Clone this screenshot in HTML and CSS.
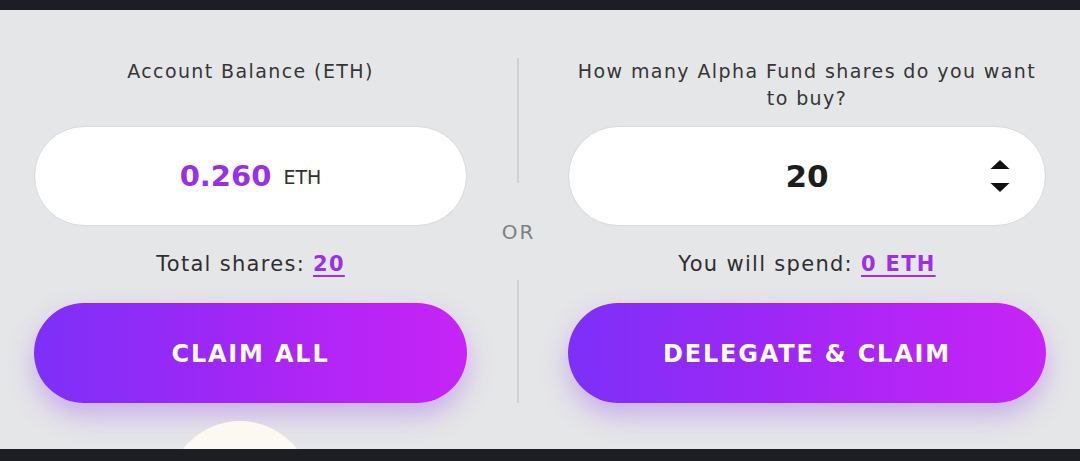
FILE: index.html
```html
<!DOCTYPE html>
<html>
<head>
<meta charset="utf-8">
<link rel="stylesheet" href="styles.css">
</head>
<body>
<div class="topbar"></div>
<main class="panel">
  <section class="col col-left">
    <div class="label">Account Balance (ETH)</div>
    <div class="pill">
      <span class="amount">0.260</span><span class="unit">ETH</span>
    </div>
    <div class="info">Total shares: <a class="val">20</a></div>
    <button class="btn">CLAIM ALL</button>
  </section>
  <div class="divider">
    <div class="vline vline-top"></div>
    <div class="or">OR</div>
    <div class="vline vline-bottom"></div>
  </div>
  <section class="col col-right">
    <div class="label">How many Alpha Fund shares do you want to buy?</div>
    <div class="pill pill-num">
      <span class="num">20</span>
      <span class="spin">
        <svg width="20" height="34" viewBox="0 0 20 34"><polygon points="10,0 19.5,9 0.5,9" fill="#111"/><polygon points="0.5,23 19.5,23 10,32" fill="#111"/></svg>
      </span>
    </div>
    <div class="info">You will spend: <a class="val">0 ETH</a></div>
    <button class="btn">DELEGATE &amp; CLAIM</button>
  </section>
  <div class="deco"></div>
</main>
<div class="bottombar"></div>
</body>
</html>
```
FILE: styles.css
```css
* { box-sizing: border-box; }
html, body { margin: 0; padding: 0; }
body {
  width: 1080px;
  height: 461px;
  overflow: hidden;
  background: #1b1d22;
  font-family: "DejaVu Sans", "Open Sans", sans-serif;
  color: #2b2b2b;
}
.topbar { height: 10px; background: #1c1e23; }
.bottombar { height: 12px; background: #1c1e23; }
.panel {
  position: relative;
  height: 439px;
  overflow: hidden;
  background: #e5e6e8;
  display: grid;
  grid-template-columns: 433px 101px 478px;
  padding: 48px 0 0 34px;
}
.col { display: flex; flex-direction: column; align-items: stretch; }
.label {
  height: 68px;
  font-size: 19px;
  line-height: 27px;
  text-align: center;
  color: #363636;
  padding: 0 2px;
  letter-spacing: 1.4px;
}
.pill {
  height: 100px;
  background: #fff;
  border-radius: 50px;
  border: 1px solid #d9d9dc;
  display: flex;
  align-items: center;
  justify-content: center;
  gap: 12px;
}
.amount {
  font-size: 29px;
  font-weight: 700;
  color: #9a30e6;
}
.unit { font-size: 19px; color: #333; margin-top: 1px; }
.pill-num { position: relative; }
.num { font-size: 31px; font-weight: 700; color: #1d1d1d; }
.spin {
  position: absolute;
  right: 35px;
  top: 33px;
  display: flex;
}
.info {
  margin-top: 24px;
  height: 28px;
  font-size: 21px;
  line-height: 28px;
  text-align: center;
  color: #2f2f2f;
  letter-spacing: 1.3px;
}
.val {
  color: #9b30e8;
  font-weight: 700;
  text-decoration: underline;
  text-underline-offset: 4px;
  text-decoration-thickness: 2px;
}
.btn {
  margin-top: 25px;
  height: 100px;
  border: none;
  border-radius: 50px;
  background: linear-gradient(90deg, #7c30f8 0%, #a426f6 50%, #c824f6 100%);
  color: #fff;
  font-family: inherit;
  font-size: 24px;
  font-weight: 700;
  letter-spacing: 1.8px;
  padding-top: 2px;
  box-shadow: 0 12px 26px rgba(150, 70, 240, 0.35);
}
.divider { display: flex; flex-direction: column; align-items: center; }
.vline { width: 2px; background: #d0d1d4; }
.vline-top { margin-top: 0; height: 125px; }
.or {
  height: 97px;
  display: flex;
  align-items: center;
  font-size: 20px;
  color: #7d7f83;
  letter-spacing: 2px;
  padding-left: 2px;
}
.vline-bottom { height: 123px; }
.deco {
  position: absolute;
  left: 168px;
  top: 411px;
  width: 144px;
  height: 144px;
  border-radius: 50%;
  background: #fcf9f2;
}
```
